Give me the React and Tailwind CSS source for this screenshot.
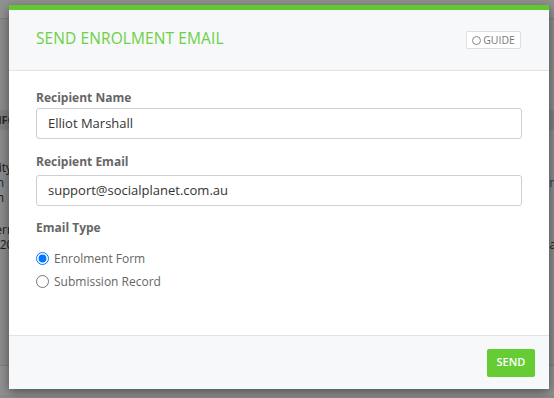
import React from "react";

export default function App() {
  const font = { fontFamily: '"Open Sans", "Noto Sans", sans-serif' };
  return (
    <div className="relative w-[554px] h-[398px] overflow-hidden bg-[#f4f4f4]" style={font}>
      {/* underlying page */}
      <div className="flex flex-col text-[12px] text-[#333]">
        <div className="h-[19px] bg-white border-b border-[#dcdcdc]" />
        <div className="h-[91px]" />
        <div className="h-[20px] bg-[#e2e2e2] flex items-center text-[11px] font-bold text-[#444]">
          <span className="ml-[-11px]">INFO</span>
        </div>
        <div className="h-[30px]" />
        <div className="flex flex-col leading-[15px]">
          <div className="flex"><span className="ml-[-28px]">Activity</span></div>
          <div className="flex justify-between"><span className="ml-[-9px] text-[#1a4f7a]">ch</span><span className="mr-[-14px] text-[#3a6ea5]">info</span></div>
          <div className="flex"><span className="ml-[-9px]">ch</span></div>
        </div>
        <div className="h-[17px]" />
        <div className="flex flex-col leading-[15px]">
          <div className="flex"><span className="ml-[-30px]">Modern</span></div>
          <div className="flex justify-between"><span className="ml-[-14px]">2020</span><span className="mr-[-20px]">name</span></div>
        </div>
        <div className="h-[113px]" />
        <div className="h-[30px] border-t border-[#dcdcdc] bg-white" />
      </div>

      {/* overlay */}
      <div className="absolute inset-0 bg-[rgba(0,0,0,0.43)] pl-[9px] pt-[5px]">
        <div className="w-[540px] h-[384px] bg-white border-t-[5px] border-[#61c834] shadow-[0_3px_10px_rgba(0,0,0,0.45)] flex flex-col">
          {/* header */}
          <div className="h-[61px] bg-[#f7f8fa] border-b border-[#e3e3e3] flex items-center justify-between pl-[27px] pr-[28px] shrink-0">
            <div className="text-[15.5px] text-[#6bd043] tracking-[0.1px] pb-[3px]">SEND ENROLMENT EMAIL</div>
            <button className="h-[18px] w-[55px] bg-white border border-[#dedede] rounded-[2px] flex items-center justify-center gap-[2px] text-[10.5px] text-[#777] leading-none">
              <span className="w-[9px] h-[9px] rounded-full border border-[#888] inline-block" />
              <span>GUIDE</span>
            </button>
          </div>

          {/* body */}
          <div className="flex-1 px-[27px] pt-[19px] flex flex-col">
            <label className="text-[12px] font-bold text-[#666] leading-[16px]">Recipient Name</label>
            <div className="mt-[2px] h-[31px] border border-[#cfcfcf] rounded-[3px] flex items-center px-[11px] text-[13px] text-[#333]">
              Elliot Marshall
            </div>
            <label className="mt-[15px] text-[12px] font-bold text-[#666] leading-[16px]">Recipient Email</label>
            <div className="mt-[5px] h-[31px] border border-[#cfcfcf] rounded-[3px] flex items-center px-[11px] text-[13px] text-[#333]">
              support@socialplanet.com.au
            </div>
            <label className="mt-[14px] text-[12px] font-bold text-[#666] leading-[16px]">Email Type</label>
            <div className="mt-[16px] flex flex-col gap-[10px]">
              <label className="flex items-center gap-[5px] text-[12px] text-[#666] leading-[13px]">
                <input type="radio" name="t" defaultChecked className="m-0 w-[13px] h-[13px]" />
                Enrolment Form
              </label>
              <label className="flex items-center gap-[5px] text-[12px] text-[#666] leading-[13px]">
                <input type="radio" name="t" className="m-0 w-[13px] h-[13px]" />
                Submission Record
              </label>
            </div>
          </div>

          {/* footer */}
          <div className="h-[54px] shrink-0 bg-[#f7f8fa] border-t border-[#e3e3e3] flex items-center justify-end pr-[14px]">
            <button className="h-[28px] w-[48px] bg-[#66cc33] rounded-[2px] text-white text-[11px] font-semibold">SEND</button>
          </div>
        </div>
      </div>
    </div>
  );
}
